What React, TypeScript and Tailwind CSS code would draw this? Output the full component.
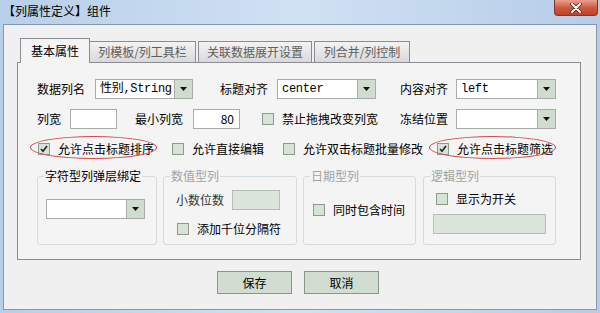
const font = "font-['Noto_Sans_CJK_SC',sans-serif]";

function Arrow() {
  return (
    <svg width="7" height="4" viewBox="0 0 7 4">
      <path d="M0 0h7L3.5 4z" fill="#111" />
    </svg>
  );
}

function Combo({ w, value = "", mono = false }: { w: string; value?: string; mono?: boolean }) {
  return (
    <div className={`flex h-[20px] border border-[#a7aea7] bg-white ${w}`}>
      <div
        className={`flex-1 min-w-0 overflow-hidden whitespace-nowrap flex items-center pl-[4px] text-[12px] text-black ${
          mono ? "font-['Liberation_Mono','Noto_Sans_CJK_SC',monospace] text-[11px] tracking-[-0.3px]" : ""
        }`}
      >
        {value}
      </div>
      <div className="w-[18px] shrink-0 flex items-center justify-center border-l border-[#a7aea7] bg-[#cfdccf]">
        <Arrow />
      </div>
    </div>
  );
}

function Check({ checked = false }: { checked?: boolean }) {
  return (
    <span className="w-[12px] h-[12px] shrink-0 border border-[#8e998e] bg-[#d8e3d8] flex items-center justify-center">
      {checked && (
        <svg width="8" height="8" viewBox="0 0 8 8">
          <path d="M1 4l2 2.2L7 1" fill="none" stroke="#222" strokeWidth="1.6" />
        </svg>
      )}
    </span>
  );
}

function CheckItem({ label, checked, w }: { label: string; checked?: boolean; w?: string }) {
  return (
    <div className={`flex items-center gap-[8px] ${w ?? ""}`}>
      <Check checked={checked} />
      <span className="text-[12px] leading-[14px] text-black whitespace-nowrap">{label}</span>
    </div>
  );
}

function Marked({ children, w }: { children: React.ReactNode; w: string }) {
  return (
    <div className={`relative ${w}`}>
      {children}
      <span className="absolute left-[-8px] top-[-6px] w-[127px] h-[23px] rounded-[50%] border border-[#d24a4a] pointer-events-none" />
    </div>
  );
}

function Group({
  title,
  disabled,
  w,
  children,
}: {
  title: string;
  disabled?: boolean;
  w: string;
  children: React.ReactNode;
}) {
  return (
    <fieldset className={`h-[76px] border border-[#d6dbe0] rounded-[3px] ${w}`}>
      <legend
        className={`ml-[6px] px-[1px] text-[12px] leading-[14px] ${
          disabled ? "text-[#a2a2a2]" : "text-black"
        }`}
      >
        {title}
      </legend>
      {children}
    </fieldset>
  );
}

export default function App() {
  return (
    <div
      className={`w-[600px] h-[313px] flex flex-col px-[3px] pb-[3px] bg-gradient-to-r from-[#b7cfe9] via-[#d0e1f3] to-[#b6cde8] ${font}`}
    >
      {/* title bar */}
      <div className="h-[24px] flex items-start">
        <span className="pt-[4px] text-[12px] leading-[14px] text-black">【列属性定义】组件</span>
        <button className="ml-auto mr-[-1px] w-[44px] h-[16px] rounded-b-[4px] border border-t-0 border-[#8a3427] bg-gradient-to-b from-[#e6a08f] via-[#cf5a44] to-[#c0402b] flex items-center justify-center">
          <svg width="12" height="10" viewBox="0 0 12 10">
            <path d="M2 1l8 8M10 1L2 9" stroke="#5a2a22" strokeWidth="3.6" strokeLinecap="round" />
            <path d="M2 1l8 8M10 1L2 9" stroke="#fff" strokeWidth="2" strokeLinecap="round" />
          </svg>
        </button>
      </div>

      {/* client area */}
      <div className="flex-1 flex flex-col border border-[#8397ad] bg-[#f0f0f0] pt-[13px] pl-[13px] pr-[15px]">
        {/* tabs */}
        <div className="flex items-end pl-[3px] h-[24px] text-[12px]">
          <div className="relative z-10 mb-[-1px] h-[25px] w-[70px] border border-b-0 border-[#898c95] bg-[#f4f4f4] flex items-center justify-center text-black">
            基本属性
          </div>
          <div className="h-[21px] w-[106px] border border-b-0 border-l-0 border-[#898c95] bg-gradient-to-b from-[#f3f3f3] to-[#d9d9d9] flex items-center justify-center text-[#5e5e5e]">
            列模板/列工具栏
          </div>
          <div className="ml-[2px] h-[21px] w-[114px] border border-b-0 border-[#898c95] bg-gradient-to-b from-[#f3f3f3] to-[#d9d9d9] flex items-center justify-center text-[#5e5e5e]">
            关联数据展开设置
          </div>
          <div className="ml-[2px] h-[21px] w-[96px] border border-b-0 border-[#898c95] bg-gradient-to-b from-[#f3f3f3] to-[#d9d9d9] flex items-center justify-center text-[#5e5e5e]">
            列合并/列控制
          </div>
        </div>

        {/* panel */}
        <div className="h-[198px] border border-[#898c95] bg-[#f4f4f4] pt-[16px] pl-[19px] text-[12px] text-black">
          <div className="flex items-center h-[20px]">
            <span className="w-[58px]">数据列名</span>
            <Combo w="w-[98px]" value="性别,String" mono />
            <span className="ml-[27px] w-[57px]">标题对齐</span>
            <Combo w="w-[99px]" value="center" mono />
            <span className="ml-[24px] w-[56px]">内容对齐</span>
            <Combo w="w-[100px]" value="left" mono />
          </div>

          <div className="flex items-center h-[20px] mt-[10px]">
            <span className="w-[33px]">列宽</span>
            <div className="w-[47px] h-[20px] border border-[#a7aea7] bg-white" />
            <span className="ml-[18px] w-[58px]">最小列宽</span>
            <div className="w-[47px] h-[20px] border border-[#a7aea7] bg-white flex items-center justify-end pr-[5px]">
              80
            </div>
            <CheckItem label="禁止拖拽改变列宽" w="ml-[22px] w-[138px]" />
            <span className="w-[56px]">冻结位置</span>
            <Combo w="w-[100px]" />
          </div>

          <div className="flex items-center h-[20px] mt-[10px] pl-[1px]">
            <Marked w="w-[134px]">
              <CheckItem label="允许点击标题排序" checked />
            </Marked>
            <CheckItem label="允许直接编辑" w="w-[111px]" />
            <CheckItem label="允许双击标题批量修改" w="w-[154px]" />
            <Marked w="w-[120px]">
              <CheckItem label="允许点击标题筛选" checked />
            </Marked>
          </div>

          <div className="flex mt-[10px] gap-[6px]">
            <Group title="字符型列弹层绑定" w="w-[120px]">
              <div className="pl-[8px] mt-[16px]">
                <Combo w="w-[99px]" />
              </div>
            </Group>
            <Group title="数值型列" disabled w="w-[134px]">
              <div className="pl-[12px] mt-[7px] flex items-center gap-[8px]">
                <span className="text-[#333]">小数位数</span>
                <div className="w-[48px] h-[20px] border border-[#b5bfb5] bg-[#dbe5db]" />
              </div>
              <div className="pl-[13px] mt-[12px]">
                <CheckItem label="添加千位分隔符" />
              </div>
            </Group>
            <Group title="日期型列" disabled w="w-[113px]">
              <div className="pl-[9px] mt-[20px]">
                <CheckItem label="同时包含时间" />
              </div>
            </Group>
            <Group title="逻辑型列" disabled w="ml-[1px] w-[133px]">
              <div className="pl-[12px] mt-[9px]">
                <CheckItem label="显示为开关" />
              </div>
              <div className="pl-[9px] mt-[8px]">
                <div className="w-[113px] h-[20px] border border-[#b5bfb5] bg-[#dbe5db]" />
              </div>
            </Group>
          </div>
        </div>

        {/* buttons */}
        <div className="flex justify-center gap-[12px] mt-[11px] pr-[2px]">
          <button className="w-[75px] h-[23px] border border-[#8a948a] bg-[#d0ddd0] text-[12px] text-black">
            保存
          </button>
          <button className="w-[75px] h-[23px] border border-[#8a948a] bg-[#d0ddd0] text-[12px] text-black">
            取消
          </button>
        </div>
      </div>
    </div>
  );
}
